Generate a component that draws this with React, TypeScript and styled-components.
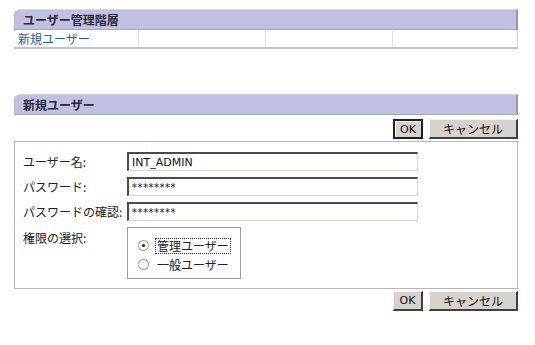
import styled, { createGlobalStyle } from 'styled-components';

const GlobalStyle = createGlobalStyle`
	body {
		margin: 0;
		background: #ffffff;
		font-family: 'Noto Sans CJK JP', 'DejaVu Sans', sans-serif;
		font-size: 12px;
		color: #222;
	}
`;

const Page = styled.div`
	width: 504px;
	padding: 9px 0 0 14px;
`;

const SectionHeader = styled.div`
	height: 19px;
	display: flex;
	align-items: center;
	padding-left: 8px;
	background: #c0c0e1;
	border-top: 1px solid #d6d6dc;
	border-left: 1px solid #b8b8c8;
	border-right: 2px solid #9a9a9a;
	border-bottom: 1px solid #a8a8b0;
	border-top-left-radius: 6px;
	font-weight: bold;
	font-size: 12px;
	color: #2a2a3a;
`;

const TreeRow = styled.div`
	display: grid;
	grid-template-columns: 125px 127px 127px 1fr;
	height: 17px;
	border-bottom: 2px solid #c4c4c4;
`;

const TreeCell = styled.div`
	display: flex;
	align-items: center;
	padding-left: 4px;
	border-right: 1px solid #e2e2e2;
	&:last-child {
		border-right: 1px solid #d0d0d0;
	}
`;

const TreeLink = styled.a`
	color: #1c5fb0;
	text-decoration: none;
	font-size: 12px;
`;

const Spacer = styled.div`
	height: 45px;
`;

const ButtonBar = styled.div<{ $top: number }>`
	display: flex;
	justify-content: flex-end;
	gap: 6px;
	padding: ${(p) => p.$top}px 0 2px;
`;

const Button = styled.button<{ $w: number; $focus?: boolean }>`
	width: ${(p) => p.$w}px;
	height: 20px;
	padding: 0;
	background: #d6d3cc;
	font-family: 'DejaVu Sans', 'Noto Sans CJK JP', sans-serif;
	font-size: 11px;
	color: #111;
	border-style: solid;
	border-width: 1px 2px 2px 1px;
	border-color: #f4f4f4 #404040 #404040 #f4f4f4;
	${(p) =>
		p.$focus &&
		`
		border: 2px solid #202020;
		box-shadow: inset 1px 1px 0 #fff;
	`}
`;

const CancelLabel = styled.span`
	font-family: 'Noto Sans CJK JP', sans-serif;
	font-size: 12px;
`;

const Panel = styled.div`
	border: 1px solid #b8b8b8;
	padding: 10px 0 9px 8px;
	display: grid;
	grid-template-columns: 104px 291px;
	row-gap: 6px;
	align-items: center;
`;

const Label = styled.div<{ $top?: boolean }>`
	font-size: 12px;
	color: #222;
	align-self: ${(p) => (p.$top ? 'start' : 'center')};
	padding-top: ${(p) => (p.$top ? '2px' : '0')};
`;

const Field = styled.input<{ $mask?: boolean }>`
	box-sizing: border-box;
	width: 291px;
	height: 19px;
	padding: 0 3px;
	margin: 0;
	border-style: solid;
	border-width: 2px 1px 1px 2px;
	border-color: #4a4a4a #d8d8d0 #d8d8d0 #4a4a4a;
	background: #fff;
	font-family: 'DejaVu Sans', sans-serif;
	font-size: ${(p) => (p.$mask ? '10px' : '11px')};
	letter-spacing: ${(p) => (p.$mask ? '0.5px' : '0')};
	color: #111;
	outline: none;
`;

const RadioBox = styled.div`
	box-sizing: border-box;
	width: 114px;
	height: 52px;
	margin-top: 0;
	border: 1px solid #9c9c9c;
	padding: 9px 0 0 10px;
	display: flex;
	flex-direction: column;
	gap: 2px;
`;

const RadioRow = styled.label`
	display: flex;
	align-items: center;
	gap: 6px;
	height: 17px;
	font-size: 12px;
`;

const RadioDot = styled.span<{ $on?: boolean }>`
	width: 9px;
	height: 9px;
	border-radius: 50%;
	border: 1px solid #9a9a9a;
	background: #fff;
	display: inline-flex;
	align-items: center;
	justify-content: center;
	&::after {
		content: '';
		width: 3px;
		height: 3px;
		border-radius: 50%;
		background: ${(p) => (p.$on ? '#222' : 'transparent')};
	}
`;

const RadioText = styled.span<{ $focus?: boolean }>`
	padding: 0 1px;
	border: 1px dotted ${(p) => (p.$focus ? '#333' : 'transparent')};
	line-height: 14px;
`;

const App = () => {
	return (
		<>
			<GlobalStyle />
			<Page>
				<SectionHeader>ユーザー管理階層</SectionHeader>
				<TreeRow>
					<TreeCell>
						<TreeLink href="#">新規ユーザー</TreeLink>
					</TreeCell>
					<TreeCell />
					<TreeCell />
					<TreeCell />
				</TreeRow>
				<Spacer />
				<SectionHeader>新規ユーザー</SectionHeader>
				<ButtonBar $top={4}>
					<Button $w={30} $focus>OK</Button>
					<Button $w={89}>
						<CancelLabel>キャンセル</CancelLabel>
					</Button>
				</ButtonBar>
				<Panel>
					<Label>ユーザー名:</Label>
					<Field defaultValue="INT_ADMIN" />
					<Label>パスワード:</Label>
					<Field $mask defaultValue="********" />
					<Label>パスワードの確認:</Label>
					<Field $mask defaultValue="********" />
					<Label $top>権限の選択:</Label>
					<RadioBox>
						<RadioRow>
							<RadioDot $on />
							<RadioText $focus>管理ユーザー</RadioText>
						</RadioRow>
						<RadioRow>
							<RadioDot />
							<RadioText>一般ユーザー</RadioText>
						</RadioRow>
					</RadioBox>
				</Panel>
				<ButtonBar $top={2}>
					<Button $w={30}>OK</Button>
					<Button $w={89}>
						<CancelLabel>キャンセル</CancelLabel>
					</Button>
				</ButtonBar>
			</Page>
		</>
	);
};

export default App;
